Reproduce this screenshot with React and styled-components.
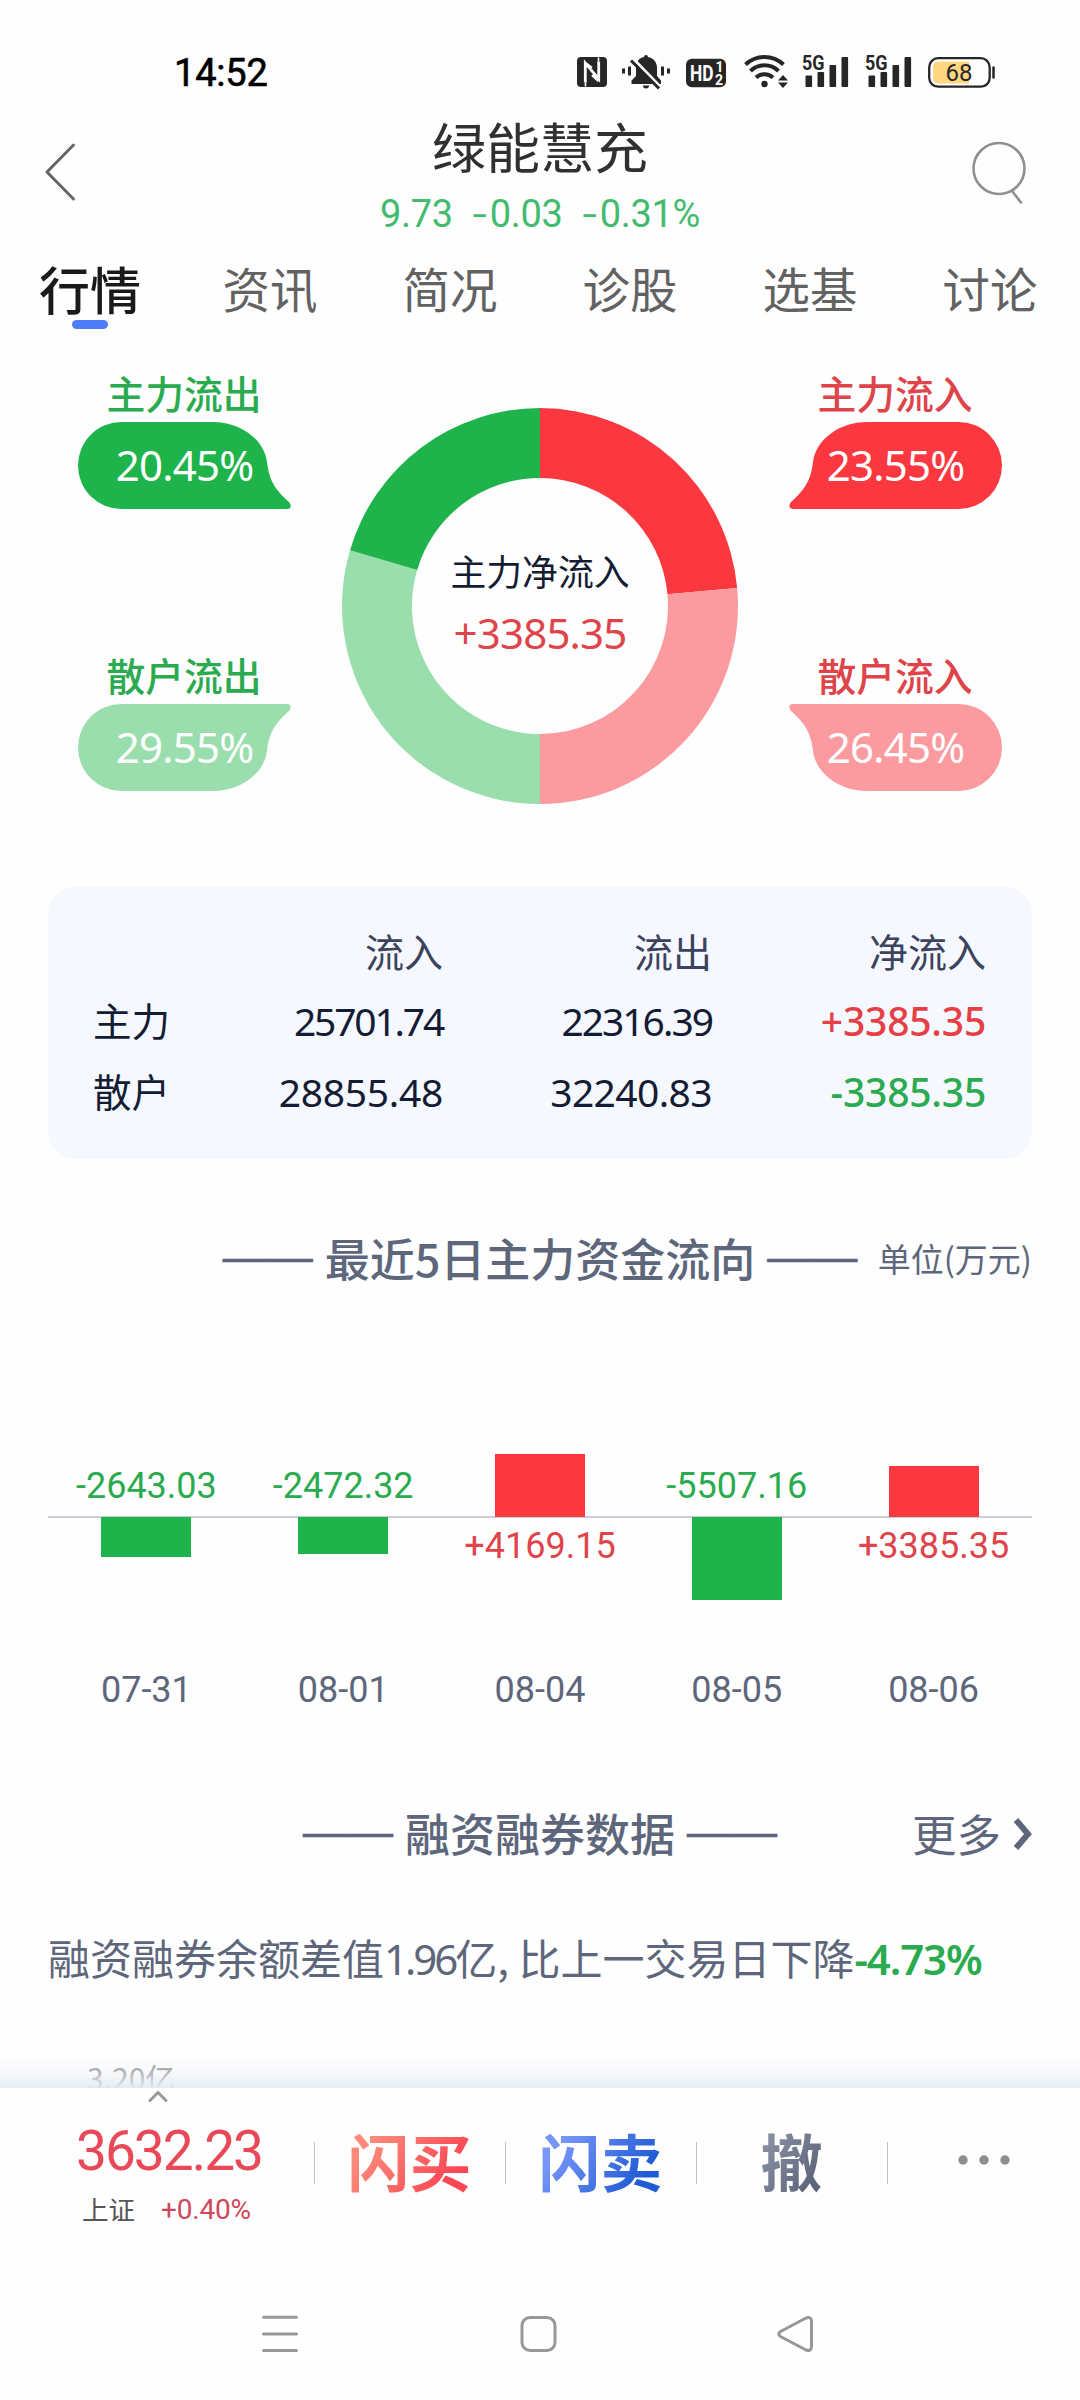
import React from 'react';
import styled, { createGlobalStyle } from 'styled-components';

const GlobalStyle = createGlobalStyle`
  :root {
    --bg: #fefefe;
    --red: #fb383f;
    --redText: #de4449;
    --redLight: #fb9ba0;
    --green: #1fb34b;
    --greenText: #2bab4f;
    --greenLight: #9adeae;
    --ink: #141c33;
    --slate: #5d667b;
    --cjk: 'Noto Sans CJK SC', sans-serif;
    --num: 'Noto Sans', 'Noto Sans CJK SC', sans-serif;
    --roboto: Roboto, 'Noto Sans CJK SC', sans-serif;
  }

  * {
    box-sizing: border-box;
  }

  body {
    margin: 0;
    background-color: var(--bg);
    font-family: var(--cjk);
  }
`;

const Screen = styled.div`
  width: 1080px;
  height: 2400px;
  display: flex;
  flex-direction: column;
  overflow: hidden;
  background-color: var(--bg);

  svg {
    display: block;
    flex-shrink: 0;
    overflow: visible;
  }
`;

/* Status bar */
const StatusBar = styled.div`
  height: 112px;
  padding: 53px 83px 0 174px;
  display: flex;
  justify-content: space-between;
  align-items: flex-start;
  color: #262626;
`;

const Clock = styled.time`
  font: 400 38px/40px var(--roboto);
  letter-spacing: -0.2px;
  -webkit-text-stroke: 0.6px #000;
  color: #000;
`;

const StatusIcons = styled.div`
  display: flex;
  align-items: flex-start;
`;

const StatusIcon = styled.svg`
  margin-left: ${(props) => props.$gap || 0}px;
  fill: currentColor;
`;

/* Header */
const Header = styled.header`
  height: 128px;
  padding: 0 54px 0 44px;
  display: grid;
  grid-template-columns: 1fr auto 1fr;
  align-items: start;
`;

const HeaderIcon = styled.svg`
  margin-top: 28px;
  justify-self: ${(props) => (props.$end ? 'end' : 'start')};
  fill: none;
  stroke-linecap: round;
  stroke-linejoin: round;
`;

const Stock = styled.div`
  display: flex;
  flex-direction: column;
  align-items: center;
  /* makes up for the unequal side padding */
  margin-left: 10px;

  h1 {
    margin: 7px 0 0;
    font: 400 54px/54px var(--cjk);
    color: #303030;
  }
`;

const Quote = styled.div`
  margin-top: 22px;
  display: flex;
  gap: 20px;
  font: 400 38px/38px var(--roboto);
  letter-spacing: -0.3px;
  color: #42bb6d;
`;

const Minus = styled.span`
  display: inline-block;
  width: 17px;
  transform: translate(-2px, 2px) scaleX(0.8);
  transform-origin: left;
`;

/* Tabs */
const Tabs = styled.nav`
  height: 100px;
  display: grid;
  grid-template-columns: repeat(6, 1fr);
`;

const Tab = styled.div`
  display: flex;
  flex-direction: column;
  align-items: center;
  padding-top: 22px;
  font-size: ${(props) => (props.$active ? 51 : 47.5)}px;
  font-weight: ${(props) => (props.$active ? 500 : 400)};
  line-height: 52px;
  color: ${(props) => (props.$active ? '#1a1a1a' : '#626262')};

  &::after {
    content: '';
    width: 36px;
    height: 9px;
    margin-top: 6px;
    border-radius: 5px;
    background-color: ${(props) => (props.$active ? '#4f7df7' : 'transparent')};
  }
`;

/* Scrolling content */
const Content = styled.main`
  height: 1748px;
  overflow: hidden;
`;

const FlowChart = styled.section`
  height: 547px;
  padding: 30px 78px 0;
  display: grid;
  grid-template-columns: 213px 396px 213px;
  justify-content: space-between;
  align-items: start;
`;

const BubbleColumn = styled.div`
  display: flex;
  flex-direction: column;
  gap: 143px;
`;

const BubbleLabel = styled.div`
  height: 52px;
  padding-right: 1px;
  text-align: center;
  font: 500 38.8px/45px var(--cjk);
  color: ${(props) => props.$color};
`;

const BubbleBox = styled.div`
  display: grid;
  height: 87px;

  svg,
  span {
    grid-area: 1 / 1;
  }

  svg {
    transform: scale(${(props) => (props.$right ? -1 : 1)}, ${(props) => (props.$up ? -1 : 1)});
  }

  span {
    z-index: 1;
    text-align: center;
    font: 400 42px/86px var(--num);
    letter-spacing: -0.8px;
    color: #fff;
  }
`;

const DonutBox = styled.div`
  display: grid;
  margin-top: 38px;

  > * {
    grid-area: 1 / 1;
  }
`;

const DonutCenter = styled.div`
  z-index: 1;
  align-self: start;
  padding-top: 142px;
  text-align: center;
  font: 400 35.8px/40px var(--cjk);
  color: var(--ink);

  strong {
    display: block;
    margin-top: 22px;
    font: 400 42px/42px var(--num);
    letter-spacing: -0.8px;
    color: var(--redText);
  }
`;

/* Totals card */
const TotalsCard = styled.section`
  height: 272px;
  margin: 0 48px;
  padding: 27px 45px 0;
  border-radius: 28px;
  background-color: #f5f8fe;
  display: grid;
  grid-template-columns: 110px 240px 269px 274px;
  grid-template-rows: 71px 71px 72px;
  align-items: center;
  color: var(--ink);
`;

const HeadCell = styled.div`
  text-align: right;
  font: 400 39px/40px var(--cjk);
  color: #3c435c;
`;

const NameCell = styled.div`
  padding-bottom: 4px;
  font: 400 38.5px/40px var(--cjk);
`;

const NumberCell = styled.div`
  text-align: right;
  font: ${(props) => (props.$color ? 500 : 400)} 39px/40px var(--num);
  letter-spacing: ${(props) => props.$track || 0}px;
  color: ${(props) => props.$color || 'inherit'};
`;

/* Section headings */
const SectionHead = styled.div`
  display: grid;
  grid-template-columns: 1fr auto 1fr;
  align-items: center;
  height: 60px;
  padding: 0 48px;
  margin-top: ${(props) => props.$top}px;
  color: var(--slate);

  h2 {
    grid-column: 2;
    margin: 0;
    display: flex;
    gap: 12px;
    font: 500 45px/60px var(--cjk);
  }
`;

const Rule = styled.span`
  margin-top: -1px;
  font: 400 45px/60px 'Liberation Sans', sans-serif;
  -webkit-text-stroke: 0.7px currentColor;
`;

const Unit = styled.span`
  text-align: right;
  font: 400 33px/60px var(--cjk);
`;

const More = styled.span`
  display: flex;
  justify-content: flex-end;
  align-items: center;
  gap: 12px;
  font: 400 44.5px/60px var(--cjk);
`;

/* Five day bars */
const Bars = styled.section`
  height: 318px;
  margin: 102px 48px 0;
  display: grid;
  grid-template-columns: repeat(5, 1fr);
  background: linear-gradient(#cacdd8, #cacdd8) 0 126px / 100% 2px no-repeat;
`;

const BarColumn = styled.div`
  display: grid;
  grid-template-rows: 127px 152px 39px;
  justify-items: center;
  font: 400 36px/42px var(--roboto);
  color: var(--slate);
`;

const BarHalf = styled.div`
  display: flex;
  flex-direction: column;
  justify-content: ${(props) => (props.$top ? 'flex-end' : 'flex-start')};
  align-items: center;
`;

const Bar = styled.div`
  width: 90px;
  background-color: ${(props) => (props.$up ? 'var(--red)' : 'var(--green)')};
`;

const BarValue = styled.div`
  margin: ${(props) => (props.$up ? '8px 0 0' : '0 0 10px')};
  color: ${(props) => (props.$up ? 'var(--redText)' : 'var(--greenText)')};
`;

const Summary = styled.p`
  margin: 64px 48px 0;
  font: 400 42px/60px var(--cjk);
  color: var(--slate);
  white-space: pre;

  span {
    font-family: var(--num);
    letter-spacing: -3px;
  }

  strong {
    font: 600 42px/60px var(--num);
    letter-spacing: -1.1px;
    color: var(--greenText);
  }
`;

const AxisLabel = styled.div`
  margin: 68px 0 0 87px;
  font: 400 30px/40px var(--cjk);
  color: #8c8c8c;
`;

/* Pinned trade bar */
const TradeBar = styled.footer`
  position: relative;
  height: 172px;
  display: grid;
  grid-template-columns: 314px 191px 191px 191px 193px;
  background-color: var(--bg);

  &::before {
    content: '';
    position: absolute;
    left: 0;
    right: 0;
    bottom: 100%;
    height: 32px;
    background-image: linear-gradient(
      rgba(244, 247, 251, 0),
      rgba(236, 240, 247, 0.5) 60%,
      rgba(227, 235, 243, 0.95)
    );
  }
`;

const Index = styled.div`
  padding-left: 76px;

  svg {
    margin: 2px 0 0 71px;
  }
`;

const IndexValue = styled.div`
  margin-top: 20px;
  font: 400 55px/55px var(--roboto);
  letter-spacing: -2px;
  color: #e84858;
`;

const IndexMeta = styled.div`
  display: flex;
  gap: 26px;
  margin: 14px 0 0 6px;
  font: 400 26.5px/32px var(--cjk);
  color: #555;

  span:last-child {
    font: 400 28px/34px var(--roboto);
    letter-spacing: -0.2px;
    color: #d0465a;
  }
`;

const Action = styled.div`
  display: flex;
  justify-content: center;
  padding-top: 37px;
  height: 112px;
  background: linear-gradient(#c4c4c4, #c4c4c4) 0 54px / 1px 42px no-repeat;

  span {
    font: 700 62px/70px var(--cjk);
    color: transparent;
    background-image: linear-gradient(125deg, ${(props) => props.$from} 20%, ${(props) => props.$to} 80%);
    background-clip: text;
  }

  svg {
    margin-top: 30px;
  }
`;

/* System navigation */
const SystemNav = styled.div`
  height: 140px;
  padding: 54px 265px 0 260px;
  display: flex;
  justify-content: space-between;

  svg {
    fill: none;
    stroke: #979797;
    stroke-width: 3;
    stroke-linecap: round;
    stroke-linejoin: round;
  }
`;

const tabs = ['行情', '资讯', '简况', '诊股', '选基', '讨论'];

const outflow = [
  { label: '主力流出', share: 20.45, fill: 'var(--green)' },
  { label: '散户流出', share: 29.55, fill: 'var(--greenLight)' },
];

const inflow = [
  { label: '主力流入', share: 23.55, fill: 'var(--red)' },
  { label: '散户流入', share: 26.45, fill: 'var(--redLight)' },
];

const days = [
  { date: '07-31', value: -2643.03 },
  { date: '08-01', value: -2472.32 },
  { date: '08-04', value: 4169.15 },
  { date: '08-05', value: -5507.16 },
  { date: '08-06', value: 3385.35 },
];

const PX_PER_UNIT = 0.015;

function Signal({ gap }) {
  return (
    <StatusIcon width="47" height="36" viewBox="0 0 47 36" $gap={gap}>
      <text x="0" y="17" fontFamily="Roboto" fontWeight="700" fontSize="20.5" textLength="22.5" lengthAdjust="spacingAndGlyphs">
        5G
      </text>
      <rect x="3.5" y="22.5" width="6.6" height="11.5" rx="1" />
      <rect x="15.5" y="19" width="6.6" height="15" rx="1" />
      <rect x="27.5" y="12" width="6.6" height="22" rx="1" />
      <rect x="39.5" y="4" width="6.6" height="30" rx="1" />
    </StatusIcon>
  );
}

function Status() {
  return (
    <StatusBar>
      <Clock>14:52</Clock>
      <StatusIcons>
        <StatusIcon width="30" height="36" viewBox="0 0 30 36">
          <rect y="4" width="30" height="30" rx="4" />
          <path d="M8.3 29.5V10l13.4 16V8.5M8.3 10l6.5 5M21.7 28l-6.5-6" fill="none" stroke="#fff" strokeWidth="2.8" />
          <path d="M8.5 29.5v4M21.5 4.5v4" fill="none" stroke="#fff" strokeWidth="1.6" />
        </StatusIcon>
        <StatusIcon width="48" height="36" viewBox="0 0 48 36" $gap={15}>
          <path d="M0 15.5h3v5H0zM6 13.5h3v9H6zM39 13.5h3v9h-3zM45 15.5h3v5h-3z" />
          <path d="M22 4a2 2 0 0 1 4 0c6 1.2 9 5.5 9 11v8l4 4.5V31H9.5v-3.5L14 23v-8c0-5.5 2-9.8 8-11z" />
          <path d="M21 32.5h6a3 3 0 0 1-6 0z" />
          <path d="M11 5.5l28 29" stroke="#fefefe" strokeWidth="3" />
          <path d="M9 7.5l28 28" stroke="currentColor" strokeWidth="3" />
        </StatusIcon>
        <StatusIcon width="40" height="36" viewBox="0 0 40 36" $gap={16}>
          <rect y="5.7" width="40" height="28.5" rx="6" />
          <g fill="#fff" fontFamily="Roboto" fontWeight="700">
            <text x="4" y="27.5" fontSize="21.5" textLength="23.5" lengthAdjust="spacingAndGlyphs">
              HD
            </text>
            <text x="29.5" y="19" fontSize="14">1</text>
            <text x="29" y="31.5" fontSize="14">2</text>
          </g>
        </StatusIcon>
        <StatusIcon width="45" height="36" viewBox="0 0 45 36" $gap={18}>
          <g fill="none" stroke="currentColor" strokeWidth="4">
            <path d="M1.5 11.5a27.5 27.5 0 0 1 38 0" />
            <path d="M6.5 18a20 20 0 0 1 28 0" />
            <path d="M12 24.5a12.5 12.5 0 0 1 17 0" />
          </g>
          <circle cx="20.5" cy="31" r="3.2" />
          <path d="M34 27.5l5-5.500 5 5.500zM34 29.500h10l-5 5.500z" />
        </StatusIcon>
        <Signal gap={13} />
        <Signal gap={16} />
        <StatusIcon width="69" height="36" viewBox="0 0 69 36" $gap={16}>
          <rect x="1.2" y="5.2" width="60.5" height="28.5" rx="9" fill="none" stroke="currentColor" strokeWidth="2.3" />
          <path d="M10 8.5h31v22H10a5 5 0 0 1-5-5v-12a5 5 0 0 1 5-5z" fill="#ffd780" />
          <path d="M65.5 14.5v10" stroke="currentColor" strokeWidth="2.5" strokeLinecap="round" />
          <text x="17.5" y="28" fontFamily="Roboto" fontSize="24">68</text>
        </StatusIcon>
      </StatusIcons>
    </StatusBar>
  );
}

function Bubble({ item, color, right, up }) {
  return (
    <div>
      <BubbleLabel $color={color}>{item.label}</BubbleLabel>
      <BubbleBox $right={right} $up={up}>
        <svg width="213" height="87" viewBox="0 0 213 87">
          <path
            d="M43.5 0H135C162 0 186 17 189 40C191 57 196 67 211.5 80.5Q215 87 208.5 87H43.5A43.5 43.5 0 0 1 43.5 0Z"
            fill={item.fill}
          />
        </svg>
        <span>{item.share}%</span>
      </BubbleBox>
    </div>
  );
}

// share is a percentage, measured clockwise from twelve o'clock
function point(share, radius) {
  const angle = (share / 100) * Math.PI * 2;
  return `${198 + radius * Math.sin(angle)} ${198 - radius * Math.cos(angle)}`;
}

function Donut() {
  const slices = [inflow[0], inflow[1], outflow[1], outflow[0]];
  let end = 0;
  return (
    <svg width="396" height="396" viewBox="0 0 396 396">
      {slices.map((slice) => {
        const start = end;
        end += slice.share;
        return (
          <path
            key={slice.label}
            fill={slice.fill}
            d={`M${point(start, 198)}A198 198 0 0 1 ${point(end, 198)}L${point(end, 128)}A128 128 0 0 0 ${point(start, 128)}Z`}
          />
        );
      })}
    </svg>
  );
}

function DayBar({ day }) {
  const up = day.value > 0;
  const bar = <Bar $up={up} style={{ height: Math.abs(day.value) * PX_PER_UNIT }} />;
  const value = (
    <BarValue $up={up}>
      {up ? '+' : ''}
      {day.value.toFixed(2)}
    </BarValue>
  );
  return (
    <BarColumn>
      <BarHalf $top>{up ? bar : value}</BarHalf>
      <BarHalf>{up ? value : bar}</BarHalf>
      <div>{day.date}</div>
    </BarColumn>
  );
}

function Heading({ children }) {
  return (
    <h2>
      <Rule>——</Rule>
      {children}
      <Rule>——</Rule>
    </h2>
  );
}

function App() {
  return (
    <Screen>
      <GlobalStyle />
      <Status />
      <Header>
        <HeaderIcon width="34" height="64" viewBox="0 0 34 64" stroke="#666" strokeWidth="3">
          <path d="M29.5 5L3 32l26.5 27" />
        </HeaderIcon>
        <Stock>
          <h1>绿能慧充</h1>
          <Quote>
            <span>9.73</span>
            <span>
              <Minus>−</Minus>0.03
            </span>
            <span>
              <Minus>−</Minus>0.31%
            </span>
          </Quote>
        </Stock>
        <HeaderIcon $end width="56" height="68" viewBox="0 0 56 68" stroke="#8f8f8f" strokeWidth="2.6">
          <circle cx="29" cy="28.5" r="25.5" />
          <path d="M42 51l9 11.5" />
        </HeaderIcon>
      </Header>
      <Tabs>
        {tabs.map((tab, index) => (
          <Tab key={tab} $active={index === 0}>
            {tab}
          </Tab>
        ))}
      </Tabs>

      <Content>
        <FlowChart>
          <BubbleColumn>
            {outflow.map((item, index) => (
              <Bubble key={item.label} item={item} color="var(--greenText)" up={index === 1} />
            ))}
          </BubbleColumn>
          <DonutBox>
            <Donut />
            <DonutCenter>
              主力净流入
              <strong>+3385.35</strong>
            </DonutCenter>
          </DonutBox>
          <BubbleColumn>
            {inflow.map((item, index) => (
              <Bubble key={item.label} item={item} color="var(--redText)" up={index === 1} right />
            ))}
          </BubbleColumn>
        </FlowChart>

        <TotalsCard>
          <span />
          <HeadCell>流入</HeadCell>
          <HeadCell>流出</HeadCell>
          <HeadCell>净流入</HeadCell>
          <NameCell>主力</NameCell>
          <NumberCell $track={-2.2}>25701.74</NumberCell>
          <NumberCell $track={-2}>22316.39</NumberCell>
          <NumberCell $color="#e63f45" $track={-0.2}>+3385.35</NumberCell>
          <NameCell>散户</NameCell>
          <NumberCell $track={-0.3}>28855.48</NumberCell>
          <NumberCell $track={-0.6}>32240.83</NumberCell>
          <NumberCell $color="var(--greenText)" $track={-0.2}>-3385.35</NumberCell>
        </TotalsCard>

        <SectionHead $top={69}>
          <Heading>最近5日主力资金流向</Heading>
          <Unit>单位(万元)</Unit>
        </SectionHead>
        <Bars>
          {days.map((day) => (
            <DayBar key={day.date} day={day} />
          ))}
        </Bars>

        <SectionHead $top={95}>
          <Heading>融资融券数据</Heading>
          <More>
            更多
            <svg width="19" height="36" viewBox="0 0 19 36" fill="none" stroke="currentColor" strokeWidth="6">
              <path d="M3 5L15 19 3 33" />
            </svg>
          </More>
        </SectionHead>
        <Summary>
          融资融券余额差值<span>1.96</span>亿, 比上一交易日下降<strong>-4.73%</strong>
        </Summary>
        <AxisLabel>3.20亿</AxisLabel>
      </Content>

      <TradeBar>
        <Index>
          <svg width="22" height="14" viewBox="0 0 22 14" fill="none" stroke="#999" strokeWidth="3" strokeLinecap="round">
            <path d="M3 10.5l8-8 8 8" />
          </svg>
          <IndexValue>3632.23</IndexValue>
          <IndexMeta>
            <span>上证</span>
            <span>+0.40%</span>
          </IndexMeta>
        </Index>
        <Action $from="#ff8a7a" $to="#fb4654">
          <span>闪买</span>
        </Action>
        <Action $from="#7896fa" $to="#1f5bd4">
          <span>闪卖</span>
        </Action>
        <Action $from="#868da0" $to="#5e667c">
          <span>撤</span>
        </Action>
        <Action>
          <svg width="52" height="10" viewBox="0 0 52 10" fill="#8e8e8e">
            <circle cx="5" cy="5" r="4.7" />
            <circle cx="26" cy="5" r="4.7" />
            <circle cx="47" cy="5" r="4.7" />
          </svg>
        </Action>
      </TradeBar>

      <SystemNav>
        <svg width="40" height="40" viewBox="0 0 40 40">
          <path d="M3.5 3.3h33M3.5 20h33M3.5 36.5h33" />
        </svg>
        <svg width="40" height="40" viewBox="0 0 40 40">
          <rect x="4" y="3.5" width="33" height="33" rx="8" />
        </svg>
        <svg width="40" height="40" viewBox="0 0 40 40">
          <path d="M5.5 17.5L31 4Q36 2 36.5 7V32.5Q36 38 31 36L5.5 22.5Q2 20 5.5 17.5Z" />
        </svg>
      </SystemNav>
    </Screen>
  );
}

export default App;
